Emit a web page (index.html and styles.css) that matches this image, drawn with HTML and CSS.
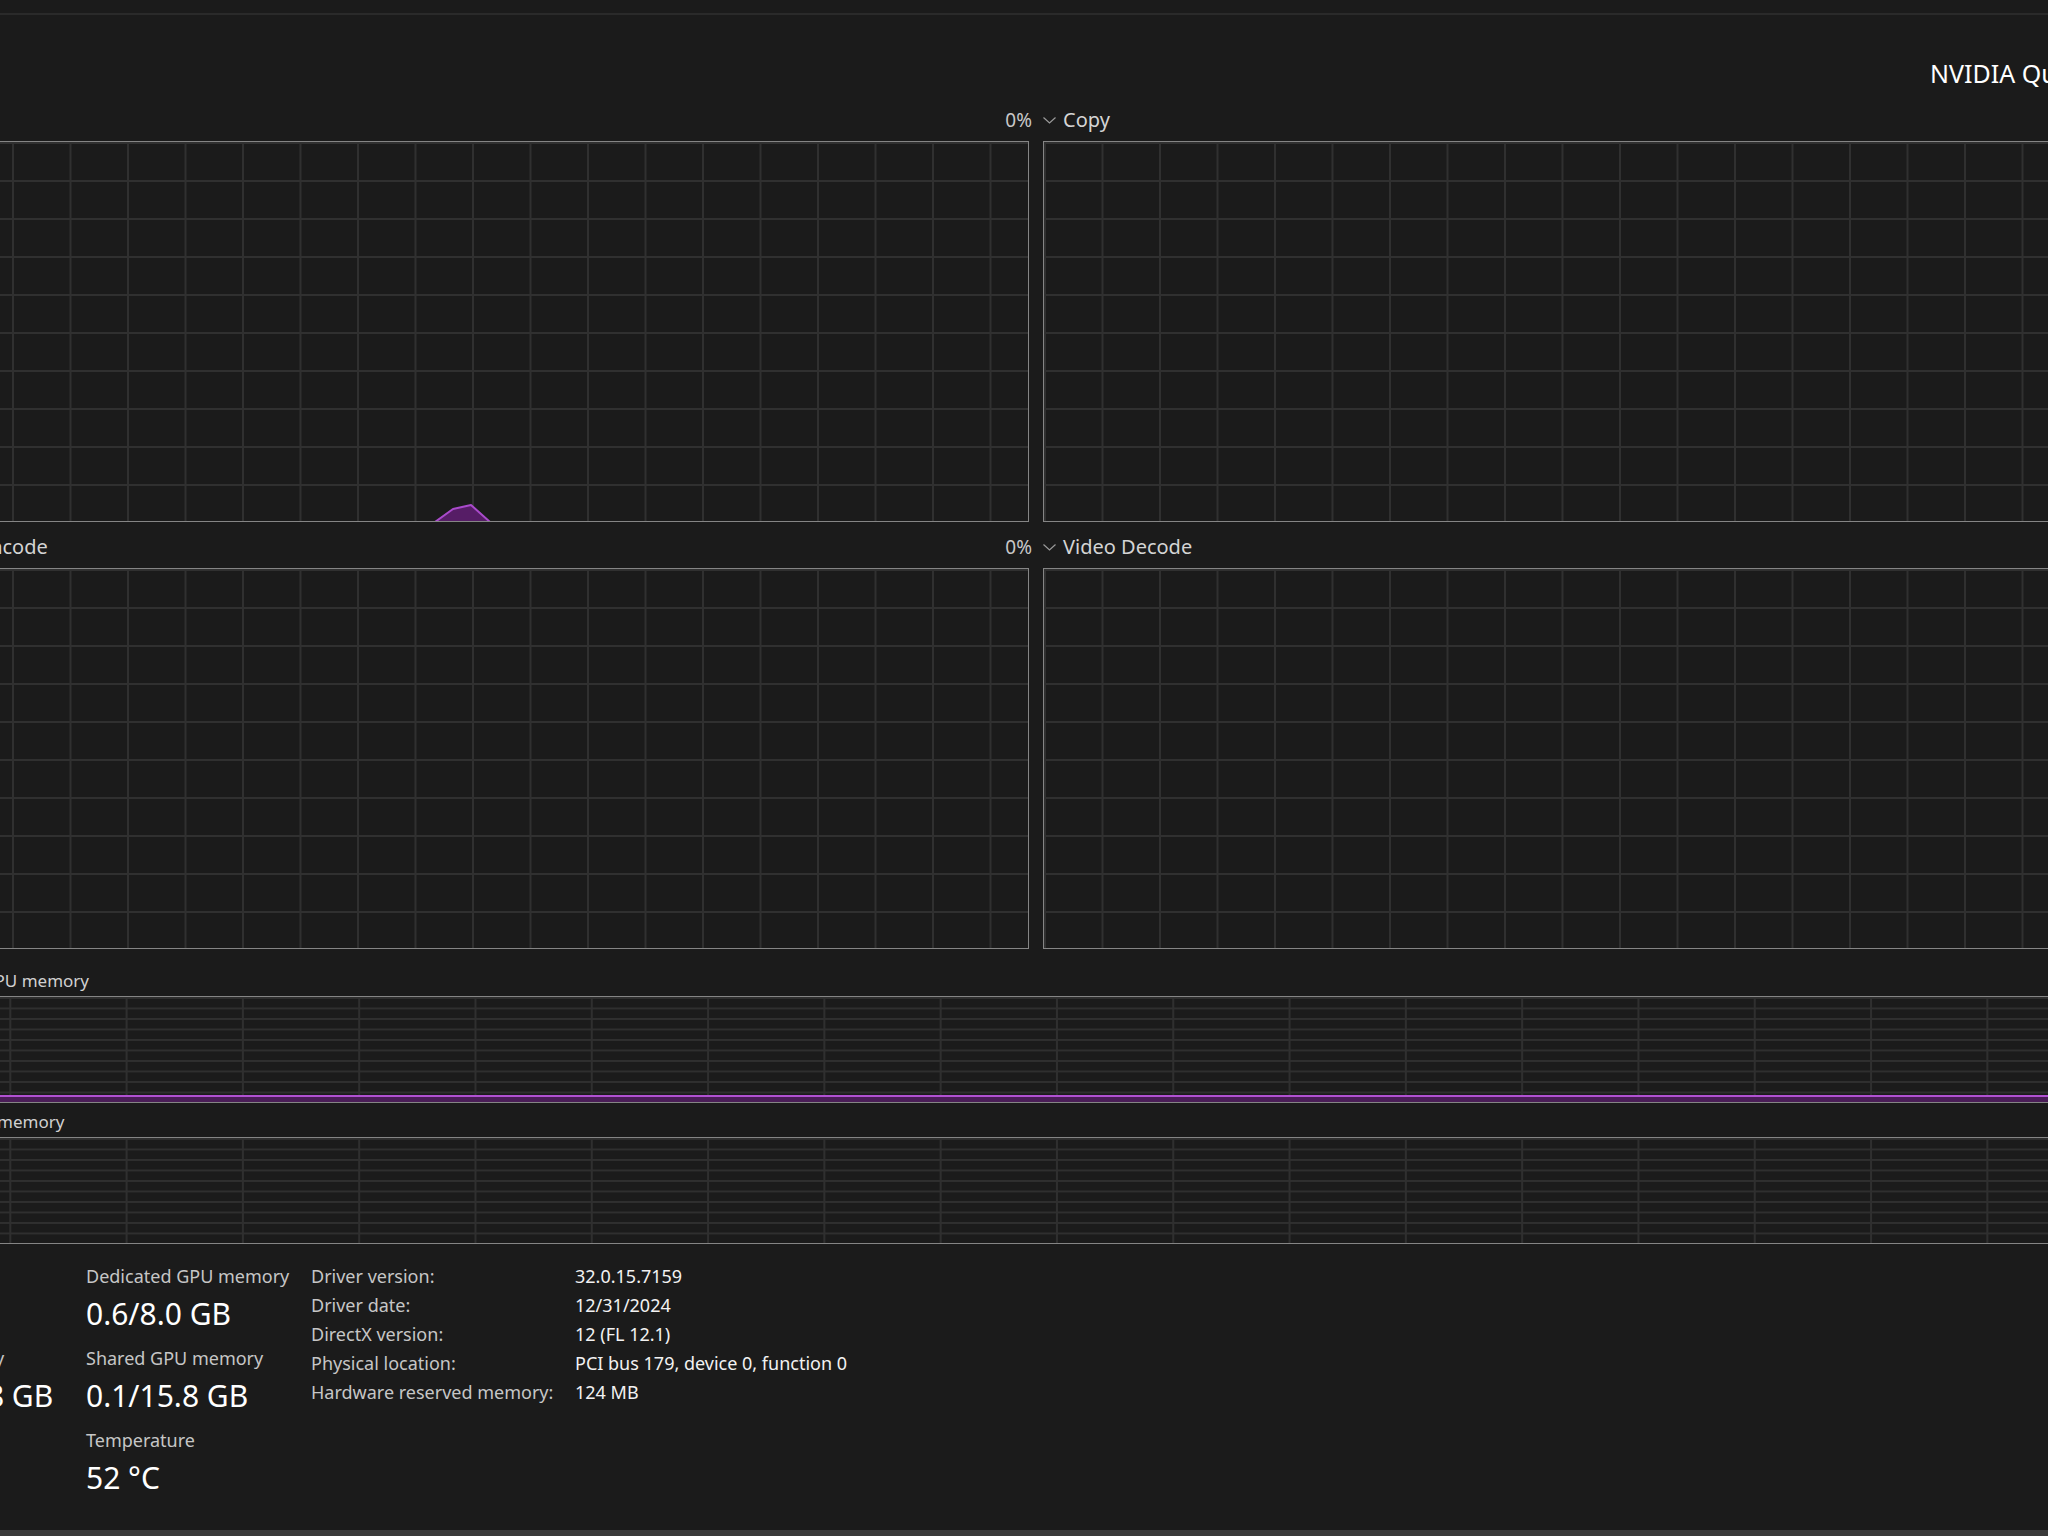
FILE: index.html
```html
<!DOCTYPE html>
<html lang="en">
<head>
  <meta charset="UTF-8" />
  <title>Task Manager - GPU</title>
  <link rel="stylesheet" href="styles.css">
</head>
<body>
  <div class="topbar"></div>

  <div class="page">
    <div class="head">
      <div class="gpu-title"></div>
      <div class="gpu-name">NVIDIA Quadro RTX 4000</div>
    </div>

    <div class="engines">
      <div class="engine">
        <div class="engine-head">
          <span class="engine-title"><svg class="chev" viewBox="0 0 13 7"><polyline points="0.5,0.5 6.5,6 12.5,0.5" /></svg>3D</span>
          <span class="engine-pct">0%</span>
        </div>
        <div class="graph">
          <svg class="plot" viewBox="0 0 1130 379" preserveAspectRatio="none">
            <polygon points="537,380 555,367 573,363 592,380" />
          </svg>
        </div>
      </div>
      <div class="engine">
        <div class="engine-head">
          <span class="engine-title"><svg class="chev" viewBox="0 0 13 7"><polyline points="0.5,0.5 6.5,6 12.5,0.5" /></svg>Copy</span>
          <span class="engine-pct">0%</span>
        </div>
        <div class="graph"></div>
      </div>
      <div class="engine">
        <div class="engine-head">
          <span class="engine-title"><svg class="chev" viewBox="0 0 13 7"><polyline points="0.5,0.5 6.5,6 12.5,0.5" /></svg>Video Encode</span>
          <span class="engine-pct">0%</span>
        </div>
        <div class="graph"></div>
      </div>
      <div class="engine">
        <div class="engine-head">
          <span class="engine-title"><svg class="chev" viewBox="0 0 13 7"><polyline points="0.5,0.5 6.5,6 12.5,0.5" /></svg>Video Decode</span>
          <span class="engine-pct">0%</span>
        </div>
        <div class="graph"></div>
      </div>
    </div>

    <div class="mem first">
      <div class="mem-head">
        <span>Dedicated GPU memory</span>
        <span>8.0 GB</span>
      </div>
      <div class="mem-graph">
        <div class="mem-fill"></div>
      </div>
    </div>

    <div class="mem">
      <div class="mem-head">
        <span>Shared GPU memory</span>
        <span>15.8 GB</span>
      </div>
      <div class="mem-graph"></div>
    </div>

    <div class="stats">
      <div class="stat-col main">
        <div class="stat">
          <div class="stat-label">Utilization</div>
          <div class="stat-value">0%</div>
        </div>
        <div class="stat">
          <div class="stat-label">GPU memory</div>
          <div class="stat-value">0.7/23.8 GB</div>
        </div>
      </div>
      <div class="stat-col">
        <div class="stat">
          <div class="stat-label">Dedicated GPU memory</div>
          <div class="stat-value">0.6/8.0 GB</div>
        </div>
        <div class="stat">
          <div class="stat-label">Shared GPU memory</div>
          <div class="stat-value">0.1/15.8 GB</div>
        </div>
        <div class="stat">
          <div class="stat-label">Temperature</div>
          <div class="stat-value">52 °C</div>
        </div>
      </div>
      <dl class="info">
        <dt>Driver version:</dt><dd>32.0.15.7159</dd>
        <dt>Driver date:</dt><dd>12/31/2024</dd>
        <dt>DirectX version:</dt><dd>12 (FL 12.1)</dd>
        <dt>Physical location:</dt><dd>PCI bus 179, device 0, function 0</dd>
        <dt>Hardware reserved memory:</dt><dd>124 MB</dd>
      </dl>
    </div>
  </div>

  <div class="bottombar"></div>
</body>
</html>
```

FILE: styles.css
```css
html, body { margin: 0; height: 100%; overflow: hidden; }
body { background: #1b1b1b; color: #fff; font-family: "Noto Sans", "Open Sans", sans-serif; display: flex; flex-direction: column; }

.topbar { height: 13px; border-bottom: 2px solid #2a2a2a; flex: none; }
.bottombar { margin-top: auto; height: 6px; background: #3a3a3a; flex: none; }

.page { margin-left: -103px; width: 2278px; flex: none; }

.head { display: grid; grid-template-columns: 2033px auto; height: 85px; box-sizing: border-box; padding-top: 41px; }
.gpu-name { font-size: 25px; line-height: 34px; white-space: nowrap; color: #fff; }

.engines { display: grid; grid-template-columns: 1132px 1132px; column-gap: 14px; row-gap: 5px; }
.engine-head { display: flex; justify-content: space-between; align-items: center; height: 41px; box-sizing: border-box; padding: 6px 0 7px; font-size: 20px; line-height: 28px; }
.engine-title { display: inline-flex; align-items: center; color: #d4d4d4; white-space: nowrap; margin-left: 4px; }
.engine-pct { color: #c8c8c8; margin-right: -3px; font-size: 19px; }
.chev { width: 13px; height: 7px; margin-right: 7px; fill: none; stroke: #9a9a9a; stroke-width: 1.2; }

.graph {
  position: relative;
  height: 381px;
  box-sizing: border-box;
  border: 1px solid #858585;
  background-image:
    linear-gradient(to right, #303030 2px, transparent 2px),
    linear-gradient(to bottom, #303030 2px, transparent 2px);
  background-size: 57.5px 100%, 100% 38px;
  background-position: -1px 0, 0 0;
}
.engine:nth-child(even) .graph { background-position: 0 0, 0 0; }
.engine:nth-child(even) .engine-title { margin-left: 0; }
.plot { position: absolute; left: 0; top: 0; width: 100%; height: 100%; }
.plot polygon { fill: #561d66; stroke: #a94acb; stroke-width: 2; stroke-linejoin: round; }

.mem.first { margin-top: 20px; }
.mem { margin-top: 7px; }
.mem-head { display: flex; justify-content: space-between; height: 24px; margin-bottom: 3px; font-size: 17px; line-height: 24px; color: #d0d0d0; white-space: nowrap; }
.mem-graph {
  position: relative;
  height: 107px;
  box-sizing: border-box;
  border-top: 1px solid #858585;
  border-bottom: 1px solid #858585;
  background-image:
    linear-gradient(to right, #2f2f2f 2px, transparent 2px),
    linear-gradient(to bottom, #2f2f2f 2px, transparent 2px);
  background-size: 116.3px 100%, 100% 10.5px;
  background-position: -4px 0, 0 0;
}
.mem-fill { position: absolute; left: 0; right: 0; bottom: 0; height: 5px; background: #4a1d57; border-top: 2px solid #b151d2; }

.stats { display: grid; grid-template-columns: 189px 225px auto; padding-top: 18px; align-items: start; }
.stat-col { padding-top: 2px; }
.stat-col.main { margin-left: -6px; }
.stat-label { font-size: 18px; line-height: 24px; color: #c6c6c6; white-space: nowrap; }
.stat-value { font-size: 30px; line-height: 40px; margin: 6px 0 12px; color: #fff; white-space: nowrap; }

.info { display: grid; grid-template-columns: 264px auto; margin: 0; font-size: 18px; line-height: 29px; }
.info dt { color: #c6c6c6; white-space: nowrap; }
.info dd { margin: 0; color: #f2f2f2; white-space: nowrap; }
```
